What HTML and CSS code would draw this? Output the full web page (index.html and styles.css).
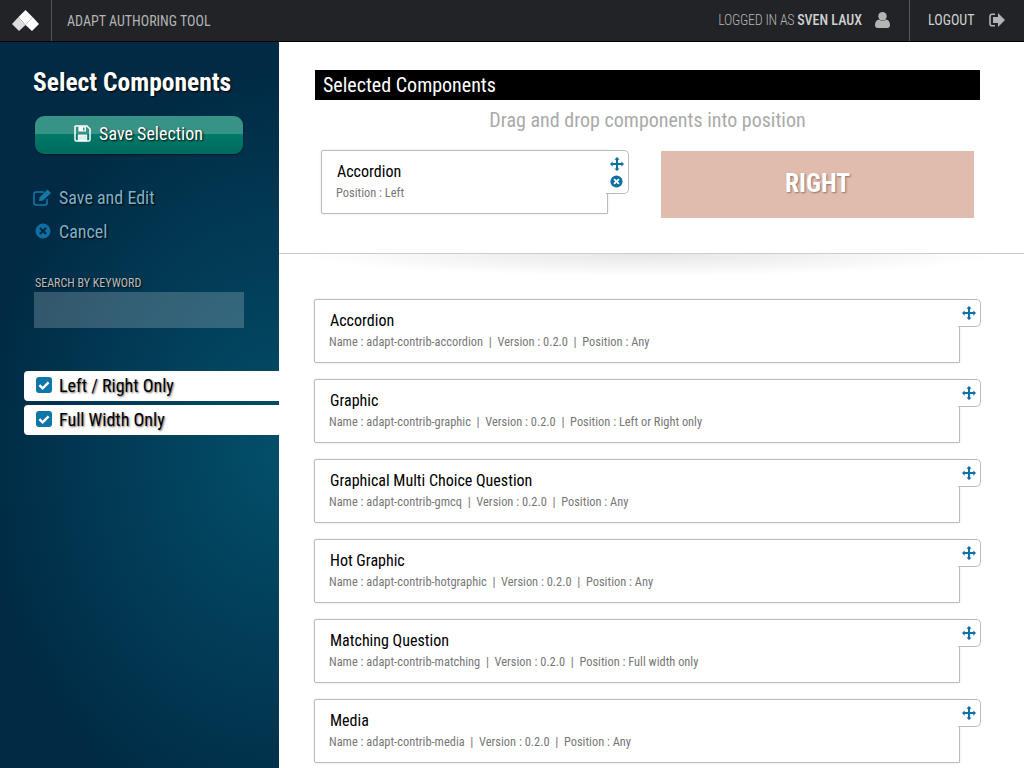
FILE: index.html
```html
<!DOCTYPE html>
<html>

<head>
    <title>Adapt Authoring Tool</title>
    <link rel="stylesheet" href="styles.css">
</head>

<body>
    <svg class="defs" width="0" height="0">
        <symbol id="move" viewBox="0 0 16 16">
            <path d="M8 0L11 3H9.2V6.8H13V5L16 8L13 11V9.2H9.2V13H11L8 16L5 13H6.8V9.2H3V11L0 8L3 5V6.8H6.8V3H5Z" />
        </symbol>
        <symbol id="cancel" viewBox="0 0 16 16">
            <path fill-rule="evenodd" d="M8 0.5A7.5 7.5 0 1 0 8 15.5A7.5 7.5 0 1 0 8 0.5ZM5.8 4.2L8 6.400L10.200 4.200L11.800 5.800L9.600 8L11.800 10.200L10.200 11.800L8 9.600L5.800 11.800L4.200 10.200L6.400 8L4.200 5.800Z" />
        </symbol>
        <symbol id="check" viewBox="0 0 16 16">
            <rect width="16" height="16" rx="3" fill="#0f77a8" />
            <path d="M3.4 8.2L6.6 11.4L12.6 5.4" fill="none" stroke="#fff" stroke-width="2.4" />
        </symbol>
    </svg>

    <header class="topbar">
        <div class="logo">
            <svg width="27" height="21" viewBox="0 0 27 21">
                <polygon points="13.500,0 20.500,7 13.500,15 6.500,7" fill="#fff" />
                <polygon points="0,14 6.500,7 13.500,15 7,21" fill="#dcdcdc" />
                <polygon points="13.500,15 20.500,7 27,14 20,21" fill="#fff" />
            </svg>
        </div>
        <div class="app-title">ADAPT AUTHORING TOOL</div>
        <div class="user">
            LOGGED IN AS&nbsp;<b>SVEN LAUX</b>
            <svg class="user-icon" width="15" height="16" viewBox="0 0 15 16">
                <circle cx="7.5" cy="4.3" r="4.2" fill="#b4b4b4" />
                <path d="M0 13C0 9.500 2 8 4 7.600C6 9.300 9 9.300 11 7.600C13 8 15 9.500 15 13C15 15 14 16 12.500 16H2.500C1 16 0 15 0 13Z" fill="#b4b4b4" />
            </svg>
        </div>
        <div class="logout">
            LOGOUT
            <svg class="logout-icon" width="16" height="14" viewBox="0 0 16 14">
                <path d="M6 1.200H3A2 2 0 0 0 1 3.200V10.800A2 2 0 0 0 3 12.800H6" fill="none" stroke="#b4b4b4" stroke-width="1.600" />
                <path d="M9 0L16 7L9 14V10H4V4H9Z" fill="#b4b4b4" />
            </svg>
        </div>
    </header>

    <div class="page">
        <aside class="sidebar">
            <h1>Select Components</h1>
            <button class="save-btn" type="button">
                <svg width="17" height="17" viewBox="0 0 17 17">
                    <path d="M1.500 1H13L16 4V14.500A1.500 1.500 0 0 1 14.500 16H2.500A1.500 1.500 0 0 1 1 14.500V1.500Z" fill="none" stroke="#fff" stroke-width="1.500" />
                    <path fill-rule="evenodd" d="M4.500 1.500H12V6.500H4.500ZM9 2.500V5.500H10.500V2.500Z" fill="#fff" />
                    <rect x="4.300" y="10" width="8.400" height="5.500" fill="#dff0ec" stroke="#fff" />
                </svg>
                Save Selection
            </button>
            <div class="side-link">
                <svg width="19" height="17" viewBox="0 0 19 17">
                    <path d="M11 3H3A2 2 0 0 0 1 5V14A2 2 0 0 0 3 16H12A2 2 0 0 0 14 14V10" fill="none" stroke="#137aa8" stroke-width="1.500" />
                    <path d="M6 12L6.700 8.300L14.500 0.500L18 4L10 11.500Z" fill="#137aa8" />
                </svg>
                Save and Edit
            </div>
            <div class="side-link">
                <svg class="cancel-icon" width="16" height="16"><use href="#cancel" /></svg>
                Cancel
            </div>
            <label class="search-label">SEARCH BY KEYWORD</label>
            <div class="search-box"></div>
            <div class="filter"><svg width="16" height="16"><use href="#check" /></svg>Left / Right Only</div>
            <div class="filter"><svg width="16" height="16"><use href="#check" /></svg>Full Width Only</div>
        </aside>

        <main class="content">
            <section class="selected">
                <h2>Selected Components</h2>
                <p class="hint">Drag and drop components into position</p>
                <div class="slots">
                    <div class="card slot-card">
                        <div class="tab tall">
                            <svg width="14" height="14"><use href="#move" /></svg>
                            <svg width="13" height="13"><use href="#cancel" /></svg>
                        </div>
                        <div class="card-name">Accordion</div>
                        <div class="card-meta">Position : Left</div>
                    </div>
                    <div class="right-slot">RIGHT</div>
                </div>
            </section>
            <div class="panel-shadow"></div>

            <div class="list">
                <div class="card">
                    <div class="tab"><svg width="14" height="14"><use href="#move" /></svg></div>
                    <div class="card-name">Accordion</div>
                    <div class="card-meta">Name : adapt-contrib-accordion &nbsp;|&nbsp; Version : 0.2.0 &nbsp;|&nbsp; Position : Any</div>
                </div>
                <div class="card">
                    <div class="tab"><svg width="14" height="14"><use href="#move" /></svg></div>
                    <div class="card-name">Graphic</div>
                    <div class="card-meta">Name : adapt-contrib-graphic &nbsp;|&nbsp; Version : 0.2.0 &nbsp;|&nbsp; Position : Left or Right only</div>
                </div>
                <div class="card">
                    <div class="tab"><svg width="14" height="14"><use href="#move" /></svg></div>
                    <div class="card-name">Graphical Multi Choice Question</div>
                    <div class="card-meta">Name : adapt-contrib-gmcq &nbsp;|&nbsp; Version : 0.2.0 &nbsp;|&nbsp; Position : Any</div>
                </div>
                <div class="card">
                    <div class="tab"><svg width="14" height="14"><use href="#move" /></svg></div>
                    <div class="card-name">Hot Graphic</div>
                    <div class="card-meta">Name : adapt-contrib-hotgraphic &nbsp;|&nbsp; Version : 0.2.0 &nbsp;|&nbsp; Position : Any</div>
                </div>
                <div class="card">
                    <div class="tab"><svg width="14" height="14"><use href="#move" /></svg></div>
                    <div class="card-name">Matching Question</div>
                    <div class="card-meta">Name : adapt-contrib-matching &nbsp;|&nbsp; Version : 0.2.0 &nbsp;|&nbsp; Position : Full width only</div>
                </div>
                <div class="card">
                    <div class="tab"><svg width="14" height="14"><use href="#move" /></svg></div>
                    <div class="card-name">Media</div>
                    <div class="card-meta">Name : adapt-contrib-media &nbsp;|&nbsp; Version : 0.2.0 &nbsp;|&nbsp; Position : Any</div>
                </div>
            </div>
        </main>
    </div>
</body>

</html>
```

FILE: styles.css
```css
html, body {
    margin: 0;
    height: 100%;
    overflow: hidden;
}

body {
    font-family: "Liberation Sans Narrow", Roboto, "Liberation Sans", sans-serif;
    font-stretch: condensed;
    background: #fff;
}

.defs {
    position: absolute;
}

.topbar {
    display: flex;
    align-items: stretch;
    height: 41px;
    background: #212326;
    border-bottom: 1px solid #000;
    color: #b4b4b4;
    font-size: 14px;
}

.logo {
    display: flex;
    align-items: center;
    justify-content: center;
    width: 51px;
    border-right: 1px solid #555;
}

.app-title {
    display: flex;
    align-items: center;
    flex: 1;
    padding-left: 15px;
}

.user {
    display: flex;
    align-items: center;
    padding-right: 19px;
    padding-bottom: 2px;
    border-right: 1px solid #555;
    font-weight: 300;
    letter-spacing: -0.25px;
}

.user b {
    font-weight: 500;
    color: #d0d0d0;
    letter-spacing: 0;
}

.user-icon {
    margin-left: 13px;
}

.logout {
    display: flex;
    align-items: center;
    width: 114px;
    padding-left: 18px;
    padding-bottom: 2px;
    box-sizing: border-box;
    color: #d0d0d0;
}

.logout-icon {
    margin-left: 15px;
}

.page {
    display: flex;
    height: 726px;
}

.sidebar {
    width: 279px;
    flex: none;
    box-sizing: border-box;
    padding: 25px 0 0 35px;
    background: radial-gradient(ellipse 290px 380px at 100% 57%, #034f6a, #023d58 50%, #012b45 100%);
    color: #fff;
}

.sidebar h1 {
    margin: 0 0 0 -2px;
    font-size: 25.5px;
    line-height: 30px;
    font-weight: bold;
    text-shadow: 1px 1px 2px #000;
}

.save-btn {
    display: flex;
    align-items: center;
    justify-content: center;
    gap: 8px;
    width: 208px;
    height: 38px;
    margin: 19px 0 26px;
    padding: 0 1px 4px 0;
    border: none;
    border-radius: 9px;
    background: linear-gradient(#389387 0, #389387 18px, #007a6a 18px, #006a5e 100%);
    box-shadow: 0 1px 2px rgba(0, 0, 0, 0.5);
    color: #fff;
    font: inherit;
    font-stretch: condensed;
    font-size: 18px;
    text-shadow: 1px 1px 2px #000;
}

.side-link {
    display: flex;
    align-items: center;
    gap: 7px;
    height: 34px;
    margin-left: -2px;
    color: #7fb0c8;
    font-size: 18px;
    text-shadow: 1px 1px 2px #000;
}

.cancel-icon {
    fill: #0f6fa0;
    margin: 0 1.5px;
}

.search-label {
    display: block;
    margin-top: 28px;
    font-size: 12px;
    line-height: 14px;
    color: #bbb;
    text-shadow: 1px 1px 2px #000;
}

.search-box {
    width: 210px;
    height: 36px;
    margin: 2px 0 43px -1px;
    background: rgba(255, 255, 255, 0.2);
}

.filter {
    display: flex;
    align-items: center;
    gap: 7px;
    height: 30px;
    margin: 0 0 4px -11px;
    padding: 0 0 2px 12px;
    box-sizing: border-box;
    border-radius: 4px 0 0 4px;
    background: #fff;
    color: #000;
    font-size: 18px;
    text-shadow: 1px 1px 2px #666;
}

.content {
    flex: 1;
    min-width: 0;
}

.selected {
    height: 183px;
    padding: 28px 44px 0 36px;
    border-bottom: 1px solid #ccc;
}

.selected h2 {
    margin: 0;
    padding-left: 8px;
    height: 30px;
    background: #000;
    color: #fff;
    font-size: 20px;
    line-height: 30px;
    font-weight: normal;
}

.hint {
    margin: 8px 0 0;
    text-align: center;
    color: #aaa;
    font-size: 20px;
    line-height: 24px;
}

.slots {
    display: flex;
    align-items: flex-start;
    margin: 19px 0 0 6px;
}

.panel-shadow {
    height: 22px;
    margin: 0 24px 0 20px;
    background: radial-gradient(ellipse 50% 100% at 50% 0, #e6e6e6, #fff 100%);
}

.card {
    position: relative;
    width: 646px;
    height: 64px;
    box-sizing: border-box;
    padding: 11px 15px 0;
    border: 1px solid #bbb;
    border-radius: 2px 0 0 2px;
    background: #fff;
    box-shadow: 0 0 3px rgba(0, 0, 0, 0.1);
}

.slot-card {
    width: 287px;
    flex: none;
    margin-top: -1px;
}

.tab {
    position: absolute;
    top: -1px;
    right: -22px;
    display: flex;
    flex-direction: column;
    align-items: center;
    gap: 4px;
    box-sizing: border-box;
    width: 23px;
    height: 28px;
    padding-top: 6px;
    padding-right: 1px;
    border: 1px solid #bbb;
    border-left: none;
    border-radius: 0 5px 5px 0;
    background: #fff;
    fill: #0f6fa0;
}

.tab.tall {
    height: 44px;
}

.card-name {
    color: #000;
    font-size: 16px;
    line-height: 20px;
}

.card-meta {
    margin: 2px 0 0 -1px;
    color: #777;
    font-size: 12.4px;
    line-height: 18px;
}

.right-slot {
    width: 313px;
    height: 67px;
    margin-left: 53px;
    background: #e0bcae;
    color: #fff;
    font-size: 25.5px;
    font-weight: bold;
    line-height: 64px;
    text-align: center;
    text-shadow: 1px 1px 2px rgba(0, 0, 0, 0.4);
}

.list {
    display: flex;
    flex-direction: column;
    gap: 16px;
    margin: 23px 0 0 35px;
}
```
